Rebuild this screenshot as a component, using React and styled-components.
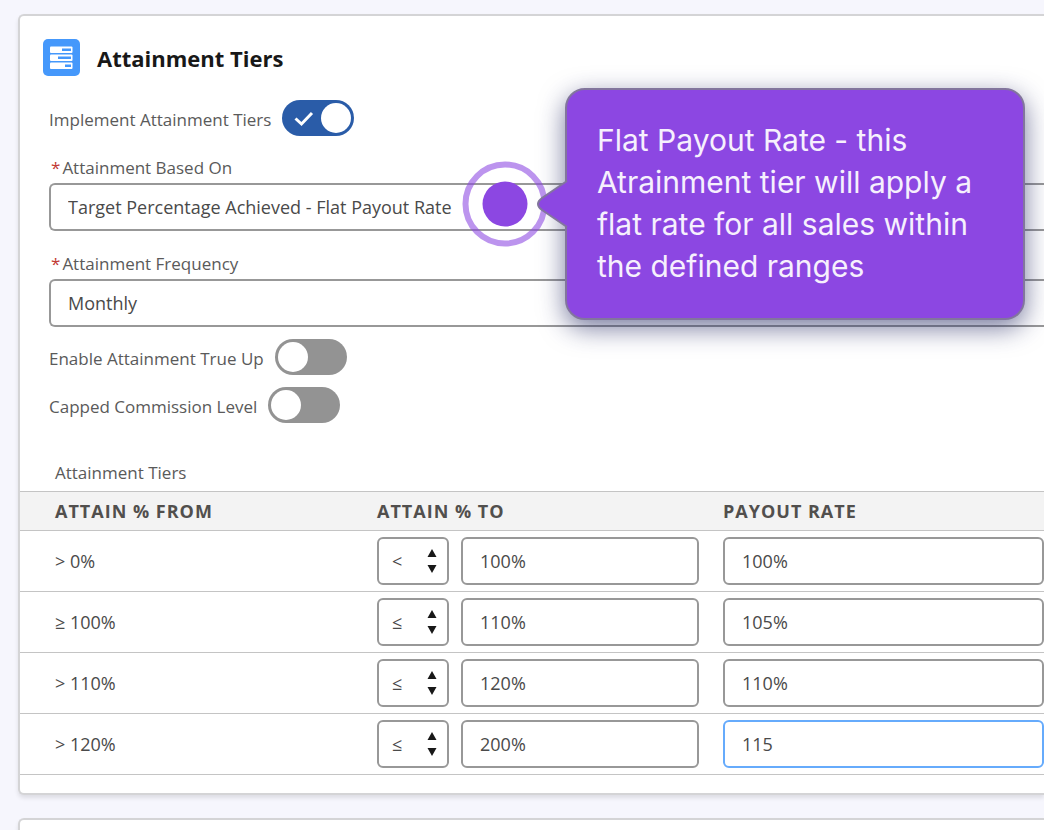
import React, { useState } from 'react';
import styled, { createGlobalStyle } from 'styled-components';

const GlobalStyle = createGlobalStyle`
* {
	box-sizing: border-box;
}
body {
	margin: 0;
	background: #f6f6fd;
	color: #4a4a4a;
	font-family: 'Open Sans', 'Noto Sans', sans-serif;
	font-size: 17px;
}
`
const Page = styled.main`
	min-height: 100vh;
	padding: 14px 0 0 18px;
	overflow: hidden;
`
const Card = styled.section`
	border: 2px solid #d4d4d6;
	border-right: 0;
	border-radius: 6px 0 0 6px;
	background: #ffffff;
	box-shadow: 0 3px 4px rgba(0, 0, 0, 0.1);
	padding-bottom: 18px;
	margin-bottom: 23px;
`
const CardHeader = styled.header`
	display: flex;
	align-items: center;
	gap: 17px;
	padding: 23px 23px 0;
`
const Title = styled.h2`
	margin: 0;
	font-size: 22px;
	line-height: 36px;
	font-weight: 700;
	color: #181818;
`
const Form = styled.form`
	display: flex;
	flex-direction: column;
	padding: 23px 0 0 29px;
`
const ToggleList = styled.div`
	display: flex;
	flex-direction: column;
	gap: 11px;
`
const ToggleRow = styled.label`
	display: flex;
	align-items: center;
	gap: 11px;
	height: 37px;
`
const ToggleText = styled.span`
	padding-top: 4px;
	line-height: 24px;
	color: #5a5a5a;
`
const ToggleInput = styled.input`
	appearance: none;
	display: flex;
	align-items: center;
	width: 72px;
	height: 36px;
	margin: 0;
	padding: 0 3px;
	border-radius: 18px;
	background: #939393;
	&::before {
		content: '';
		width: 30px;
		height: 30px;
		border-radius: 50%;
		background: #ffffff;
	}
	&:checked {
		justify-content: flex-end;
		background: #2a5ca8;
	}
`
const ToggleTrack = styled.span`
	position: relative;
	display: flex;
	svg {
		position: absolute;
		left: 12px;
		top: 11px;
		pointer-events: none;
	}
`
const Fields = styled.div`
	display: flex;
	flex-direction: column;
	gap: 21px;
	margin: 20px 0 11px;
`
const Field = styled.div`
	position: relative;
	display: flex;
	flex-direction: column;
	gap: 3px;
`
const FieldLabel = styled.label`
	padding-left: 2px;
	line-height: 24px;
	color: #5a5a5a;
`
const Required = styled.span`
	margin-right: 2px;
	color: #c23934;
`
const TextInput = styled.input`
	width: 100%;
	min-width: 0;
	height: 48px;
	padding: 0 17px;
	border: 2px solid ${props => props.$active ? '#66abfc' : '#989898'};
	border-right-width: ${props => props.$bleed ? '0' : '2px'};
	border-radius: ${props => props.$bleed ? '6px 0 0 6px' : '6px'};
	background: #ffffff;
	font: inherit;
	font-size: 18px;
	color: #4a4a4a;
	outline: none;
`
const Callout = styled.div`
	position: absolute;
	z-index: 2;
	left: 516px;
	top: -68px;
	width: 460px;
	padding: 29px 30px 31px;
	border: 2px solid #82759d;
	border-radius: 20px;
	background: #8c47e2;
	box-shadow: 0 8px 26px rgba(30, 35, 95, 0.6);
	font-family: Inter, sans-serif;
	font-size: 30px;
	line-height: 42px;
	color: #f6f0fd;
`
const Pointer = styled.svg`
	position: absolute;
	right: 100%;
	top: 70px;
	margin-right: -2px;
`
const TableCaption = styled.caption`
	padding: 38px 0 6px 35px;
	text-align: left;
	line-height: 24px;
	color: #5a5a5a;
`
const TierTable = styled.table`
	width: 100%;
	table-layout: fixed;
	border-collapse: collapse;
	font-size: 18px;
	caption {
		font-size: 17px;
	}
`
const HeadCell = styled.th`
	width: ${props => props.$width || 'auto'};
	height: 39px;
	padding: 0 0 0 ${props => props.$first ? '35px' : '12px'};
	border-top: 1px solid #c4c4c4;
	border-bottom: 1px solid #c4c4c4;
	background: #f3f3f3;
	text-align: left;
	font-weight: 700;
	letter-spacing: 1px;
	color: #514f4d;
`
const Cell = styled.td`
	height: 61px;
	padding: 0 ${props => props.$last ? '0' : '12px'} 0 ${props => props.$first ? '35px' : '12px'};
	border-bottom: 1px solid #c4c4c4;
`
const Range = styled.div`
	display: flex;
	gap: 12px;
`
const OperatorBox = styled.div`
	position: relative;
	flex: none;
	width: 72px;
	svg {
		position: absolute;
		right: 12px;
		top: 12px;
		pointer-events: none;
	}
`
const Operator = styled.select`
	appearance: none;
	width: 100%;
	height: 48px;
	padding: 0 13px;
	border: 2px solid #989898;
	border-radius: 6px;
	background: #ffffff;
	font: inherit;
	color: #4a4a4a;
`

const tiers = [
	{ from: '> 0%', operator: '<', to: '100%', rate: '100%' },
	{ from: '≥ 100%', operator: '≤', to: '110%', rate: '105%' },
	{ from: '> 110%', operator: '≤', to: '120%', rate: '110%' },
	{ from: '> 120%', operator: '≤', to: '200%', rate: '115', active: true },
];

function TiersIcon() {
	return (
		<svg width="37" height="37" viewBox="0 0 37 37" aria-hidden="true">
			<rect width="37" height="37" rx="5" fill="#4598fb" />
			<rect x="7" y="7.5" width="22.5" height="6.5" rx="1" fill="#fff" />
			<rect x="7" y="15.5" width="22.5" height="6.5" rx="1" fill="#fff" />
			<rect x="7" y="23.5" width="22.5" height="6.5" rx="1" fill="#fff" />
			<path d="M19 9.5h9v2.5h-9zM15 17.5h13v2.5h-13zM22 25.5h6v2.5h-6z" fill="#4598fb" />
		</svg>
	);
}

function Toggle({ label, defaultOn = false }) {
	const [on, setOn] = useState(defaultOn);
	return (
		<ToggleRow>
			<ToggleText>{label}</ToggleText>
			<ToggleTrack>
				<ToggleInput type="checkbox" role="switch" checked={on} onChange={() => setOn(!on)} />
				{on && (
					<svg width="20" height="16" viewBox="0 0 20 16" aria-hidden="true">
						<path d="M1.5 7.5l6 5.5L18 2" fill="none" stroke="#fff" strokeWidth="3" />
					</svg>
				)}
			</ToggleTrack>
		</ToggleRow>
	);
}

function TierRow({ tier }) {
	return (
		<tr>
			<Cell $first>{tier.from}</Cell>
			<Cell>
				<Range>
					<OperatorBox>
						<Operator aria-label={`Operator for ${tier.from}`} defaultValue={tier.operator}>
							<option>{'<'}</option>
							<option>≤</option>
						</Operator>
						<svg width="10" height="24" viewBox="0 0 10 24" aria-hidden="true">
							<path d="M5 0l4.5 8h-9zM5 24l4.5-8h-9z" fill="#181818" />
						</svg>
					</OperatorBox>
					<TextInput aria-label={`To for ${tier.from}`} defaultValue={tier.to} />
				</Range>
			</Cell>
			<Cell $last>
				<TextInput $active={tier.active} aria-label={`Payout rate for ${tier.from}`} defaultValue={tier.rate} />
			</Cell>
		</tr>
	);
}

function App() {
	return (
		<>
			<GlobalStyle />
			<Page>
				<Card>
					<CardHeader>
						<TiersIcon />
						<Title>Attainment Tiers</Title>
					</CardHeader>
					<Form>
						<Toggle label="Implement Attainment Tiers" defaultOn />
						<Fields>
							<Field>
								<FieldLabel htmlFor="based-on"><Required>*</Required>Attainment Based On</FieldLabel>
								<TextInput id="based-on" $bleed aria-describedby="based-on-tip" defaultValue="Target Percentage Achieved - Flat Payout Rate" />
								<Callout id="based-on-tip" role="tooltip">
									<Pointer width="108" height="88" viewBox="0 0 108 88" aria-hidden="true">
										<circle cx="44" cy="44" r="39.5" fill="none" stroke="#8c47e2" strokeOpacity="0.58" strokeWidth="6" />
										<circle cx="44" cy="44" r="22.5" fill="#8c47e2" />
										<path d="M108 20L81 38Q73 44 81 50L108 68z" fill="#8c47e2" />
										<path d="M106 21L81 38Q73 44 81 50L106 67" fill="none" stroke="#82759d" strokeWidth="2" />
									</Pointer>
									Flat Payout Rate - this Atrainment tier will apply a flat rate for all sales within the defined ranges
								</Callout>
							</Field>
							<Field>
								<FieldLabel htmlFor="frequency"><Required>*</Required>Attainment Frequency</FieldLabel>
								<TextInput id="frequency" $bleed defaultValue="Monthly" />
							</Field>
						</Fields>
						<ToggleList>
							<Toggle label="Enable Attainment True Up" />
							<Toggle label="Capped Commission Level" />
						</ToggleList>
					</Form>
					<TierTable>
						<TableCaption>Attainment Tiers</TableCaption>
						<thead>
							<tr>
								<HeadCell $first $width="345px">ATTAIN % FROM</HeadCell>
								<HeadCell $width="346px">ATTAIN % TO</HeadCell>
								<HeadCell>PAYOUT RATE</HeadCell>
							</tr>
						</thead>
						<tbody>
							{tiers.map(tier => <TierRow key={tier.from} tier={tier} />)}
						</tbody>
					</TierTable>
				</Card>
				<Card />
			</Page>
		</>
	);
}
export default App;
